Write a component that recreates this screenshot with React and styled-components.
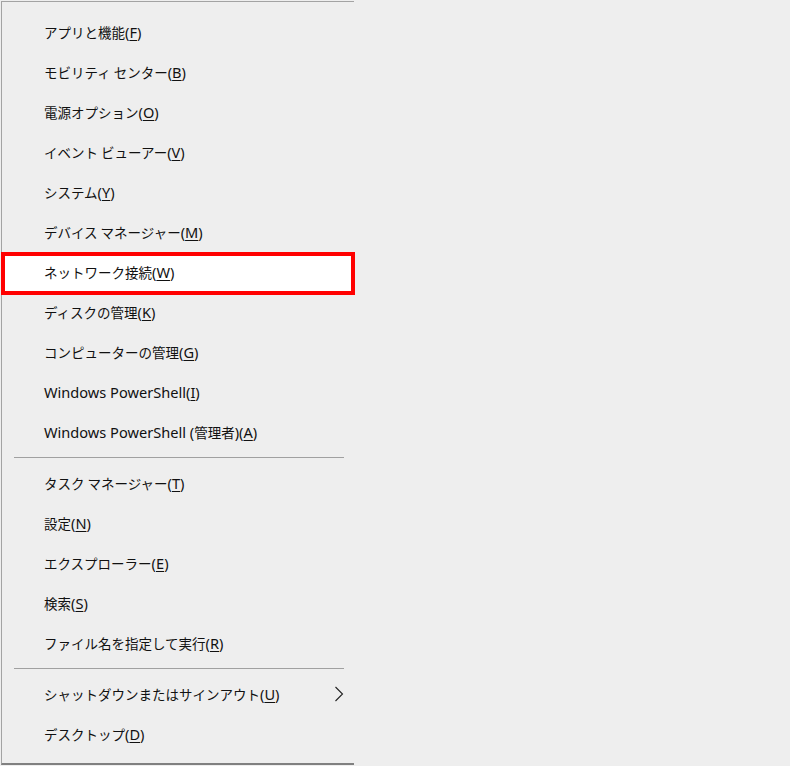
import React from "react";
import styled, { createGlobalStyle } from "styled-components";

const Global = createGlobalStyle`
  html, body { margin: 0; padding: 0; background: #eeeeee; }
  body { width: 790px; height: 766px; overflow: hidden; }
`;

const Page = styled.div`
  padding: 1px 0 0 1px;
  height: 765px;
  box-sizing: border-box;
`;

const Menu = styled.nav`
  width: 353px;
  box-sizing: border-box;
  background: #eeeeee;
  border-top: 1px solid #a3a3a3;
  border-left: 1px solid #a3a3a3;
  border-bottom: 2px solid #808080;
  padding: 10px 0 9px 0;
  display: flex;
  flex-direction: column;
  font-family: "Noto Sans CJK JP", "Noto Sans", sans-serif;
  font-size: 13.5px;
  color: #111111;
`;

const Row = styled.div`
  position: relative;
  height: 40px;
  display: flex;
  align-items: center;
  justify-content: space-between;
  padding: 0 10px 0 42px;
  background: ${(p) => (p.$active ? "#ffffff" : "transparent")};
  ${(p) =>
    p.$active &&
    `
    &::after {
      content: "";
      position: absolute;
      top: 0px;
      bottom: -3px;
      left: -1px;
      right: -1px;
      border: 4px solid #ff0000;
      pointer-events: none;
    }
  `}
`;

const Label = styled.span`
  white-space: nowrap;
  line-height: 1;
  padding-top: 1px;
`;

const Latin = styled.span`
  font-family: "Noto Sans", "Noto Sans CJK JP", sans-serif;
  font-size: 14.6px;
`;

const Key = styled.span`
  text-decoration: underline;
  text-underline-offset: 2px;
`;

const Separator = styled.div`
  height: 1px;
  background: #a0a0a0;
  margin: 5px 10px 5px 12px;
`;

const Chevron = () => (
  <svg width="10" height="16" viewBox="0 0 10 16">
    <path d="M1.5 1 L8.5 8 L1.5 15" fill="none" stroke="#222" strokeWidth="1.1" />
  </svg>
);

const groups = [
  [
    ["アプリと機能", "F"],
    ["モビリティ センター", "B"],
    ["電源オプション", "O"],
    ["イベント ビューアー", "V"],
    ["システム", "Y"],
    ["デバイス マネージャー", "M"],
    ["ネットワーク接続", "W", true],
    ["ディスクの管理", "K"],
    ["コンピューターの管理", "G"],
    ["Windows PowerShell", "I"],
    ["Windows PowerShell (管理者)", "A"],
  ],
  [
    ["タスク マネージャー", "T"],
    ["設定", "N"],
    ["エクスプローラー", "E"],
    ["検索", "S"],
    ["ファイル名を指定して実行", "R"],
  ],
  [
    ["シャットダウンまたはサインアウト", "U", false, true],
    ["デスクトップ", "D"],
  ],
];

const renderText = (text) =>
  text.split(/([A-Za-z()][A-Za-z() ]*)/).map((part, i) =>
    /^[A-Za-z()]/.test(part) ? <Latin key={i}>{part}</Latin> : part
  );

export default function App() {
  return (
    <>
      <Global />
      <Page>
        <Menu>
          {groups.map((g, gi) => (
            <React.Fragment key={gi}>
              {gi > 0 && <Separator />}
              {g.map(([label, key, active, sub]) => (
                <Row key={label} $active={active}>
                  <Label>
                    {renderText(label)}
                    <Latin>
                      (<Key>{key}</Key>)
                    </Latin>
                  </Label>
                  {sub && <Chevron />}
                </Row>
              ))}
            </React.Fragment>
          ))}
        </Menu>
      </Page>
    </>
  );
}
